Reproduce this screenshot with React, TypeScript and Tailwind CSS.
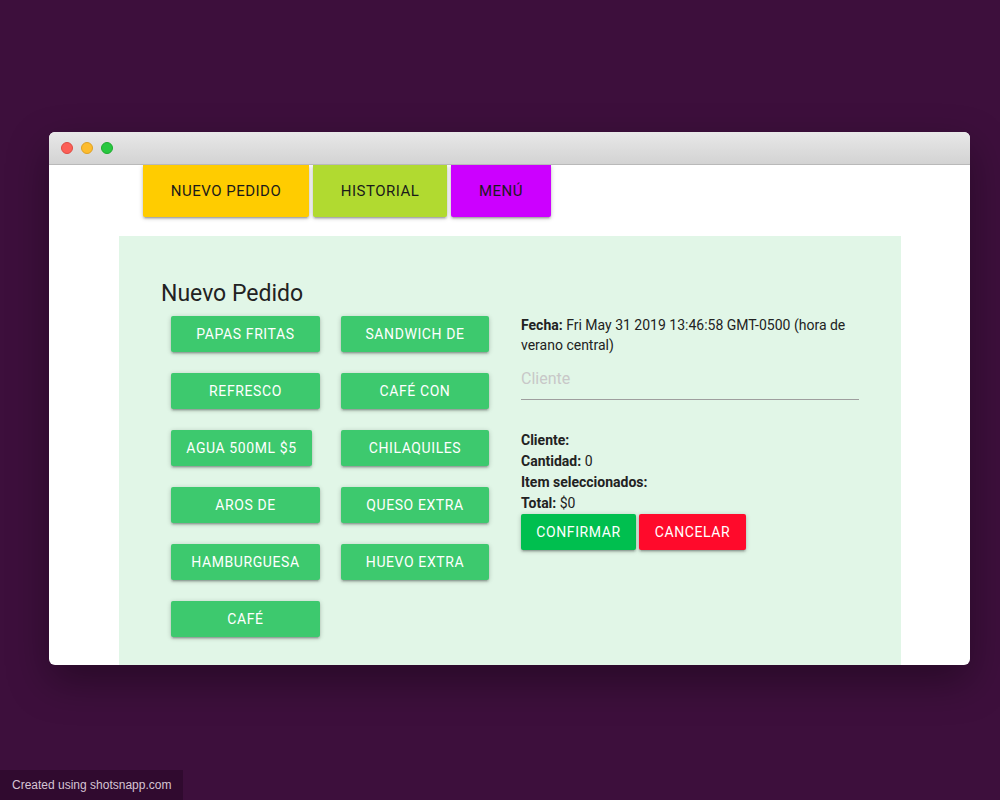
import React from "react";

const items: { label: string; w?: string }[][] = [
  [{ label: "PAPAS FRITAS" }, { label: "SANDWICH DE" }],
  [{ label: "REFRESCO" }, { label: "CAFÉ CON" }],
  [{ label: "AGUA 500ML $5", w: "w-[141px]" }, { label: "CHILAQUILES" }],
  [{ label: "AROS DE" }, { label: "QUESO EXTRA" }],
  [{ label: "HAMBURGUESA" }, { label: "HUEVO EXTRA" }],
  [{ label: "CAFÉ" }],
];

const btnShadow =
  "shadow-[0_1px_5px_0_rgba(0,0,0,0.2),0_2px_2px_0_rgba(0,0,0,0.14),0_3px_1px_-2px_rgba(0,0,0,0.12)]";

export default function App() {
  return (
    <div
      className="relative w-[1000px] h-[800px] bg-[#3d0f3c] pt-[132px] pl-[49px] overflow-hidden"
      style={{ fontFamily: "Roboto, 'Liberation Sans', sans-serif" }}
    >
      <div className="w-[921px] h-[533px] rounded-[6px] bg-white overflow-hidden flex flex-col shadow-[0_16px_40px_rgba(0,0,0,0.35)]">
        {/* title bar */}
        <div className="h-[33px] shrink-0 bg-gradient-to-b from-[#e8e8e8] to-[#d3d3d3] border-b border-[#b9b9b9] flex items-center gap-[8px] pl-[12px]">
          <span className="w-[12px] h-[12px] rounded-full bg-[#fc5f57] border border-[#de4a42]" />
          <span className="w-[12px] h-[12px] rounded-full bg-[#fdbc2e] border border-[#dea123]" />
          <span className="w-[12px] h-[12px] rounded-full bg-[#28c840] border border-[#1dab2e]" />
        </div>
        {/* body */}
        <div className="flex-1 overflow-hidden">
          {/* nav */}
          <div className="flex gap-[4px] pl-[94px] h-[52px]">
            <div className={`w-[166px] h-[52px] bg-[#ffcc00] flex items-center justify-center text-[15px] tracking-[0.5px] text-[#1a1a1a] rounded-b-[2px] ${btnShadow}`}>
              NUEVO PEDIDO
            </div>
            <div className={`w-[134px] h-[52px] bg-[#b1da30] flex items-center justify-center text-[15px] tracking-[0.5px] text-[#1a1a1a] rounded-b-[2px] ${btnShadow}`}>
              HISTORIAL
            </div>
            <div className={`w-[100px] h-[52px] bg-[#cc00ff] flex items-center justify-center text-[15px] tracking-[0.5px] text-[#1a1a1a] rounded-b-[2px] ${btnShadow}`}>
              MENÚ
            </div>
          </div>
          {/* panel */}
          <div className="ml-[70px] mt-[19px] w-[782px] h-[460px] bg-[#e1f6e7] pl-[42px] pt-[44px]">
            <div className="text-[23px] leading-[28px] text-[#222]">Nuevo Pedido</div>
            <div className="flex mt-[8px]">
              <div className="grid grid-cols-[149px_148px] gap-x-[21px] gap-y-[21px] pl-[10px] w-[360px] content-start">
                {items.flat().map((it, j) => (
                  <div
                    key={j}
                    className={`${it.w ?? "w-full"} h-[36px] rounded-[2px] bg-[#3dc96e] text-white text-[14px] tracking-[0.6px] flex items-center justify-center ${btnShadow}`}
                  >
                    {it.label}
                  </div>
                ))}
              </div>
              <div className="w-[338px] text-[14px] text-[#222]">
                <div className="leading-[20px] -mt-[1px]">
                  <b className="font-bold">Fecha:</b> Fri May 31 2019 13:46:58 GMT-0500 (hora de verano central)
                </div>
                <div className="mt-[6px] h-[39px] pb-[2px] border-b border-[#9e9e9e] flex items-center">
                  <span className="text-[16px] text-[#c8c8c8]">Cliente</span>
                </div>
                <div className="mt-[30px] leading-[21px]">
                  <div><b className="font-bold">Cliente:</b></div>
                  <div><b className="font-bold">Cantidad:</b> 0</div>
                  <div><b className="font-bold">Item seleccionados:</b></div>
                  <div><b className="font-bold">Total:</b> $0</div>
                </div>
                <div className="flex gap-[3px]">
                  <div className={`w-[115px] h-[36px] rounded-[2px] bg-[#00bf4f] text-white text-[14px] tracking-[0.6px] flex items-center justify-center ${btnShadow}`}>
                    CONFIRMAR
                  </div>
                  <div className={`w-[107px] h-[36px] rounded-[2px] bg-[#ff0a2b] text-white text-[14px] tracking-[0.6px] flex items-center justify-center ${btnShadow}`}>
                    CANCELAR
                  </div>
                </div>
              </div>
            </div>
          </div>
        </div>
      </div>
      <div
        className="absolute left-0 bottom-0 w-[183px] h-[30px] bg-[#300a2f] text-[#d6c4d4] text-[12px] flex items-center pl-[12px]"
        style={{ fontFamily: "'Liberation Sans', Arial, sans-serif" }}
      >
        Created using shotsnapp.com
      </div>
    </div>
  );
}
